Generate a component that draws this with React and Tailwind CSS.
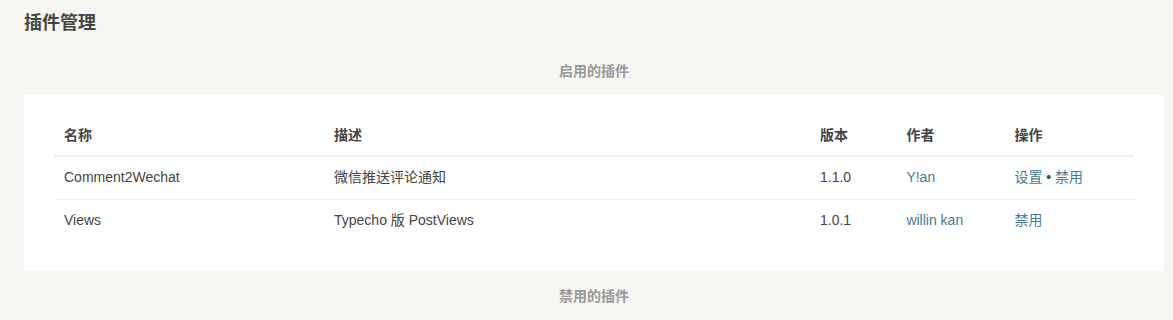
const rows = [
  { name: 'Comment2Wechat', desc: '微信推送评论通知', version: '1.1.0', author: 'Y!an', ops: ['设置', '禁用'] },
  { name: 'Views', desc: 'Typecho 版 PostViews', version: '1.0.1', author: 'willin kan', ops: ['禁用'] },
];

export default function App() {
  return (
    <div className="min-h-[320px] bg-[#f6f6f3] text-[#444] font-['Liberation_Sans','Noto_Sans_CJK_SC',sans-serif] text-[14px]">
      <div className="pl-6 pr-[9px]">
        <h2 className="pt-[11px] h-[46px] text-[18px] font-bold leading-6">插件管理</h2>
        <h4 className="h-[49px] pt-[5px] text-center text-[14px] font-bold text-[#999] leading-[40px]">启用的插件</h4>
        <div className="bg-white px-[30px] pt-[20px] pb-[29px]">
          <table className="w-full table-fixed border-collapse">
            <colgroup>
              <col className="w-[25%]" />
              <col className="w-[45%]" />
              <col className="w-[8%]" />
              <col className="w-[10%]" />
              <col className="w-[12%]" />
            </colgroup>
            <thead>
              <tr className="border-b-2 border-[#f0f0ec]">
                {['名称', '描述', '版本', '作者', '操作'].map((h) => (
                  <th key={h} className="text-left font-bold px-[10px] h-[41px] leading-5">{h}</th>
                ))}
              </tr>
            </thead>
            <tbody>
              {rows.map((r, i) => (
                <tr key={r.name} className={i === 0 ? 'border-b border-[#f0f0ec]' : ''}>
                  <td className="px-[10px] h-[43px]">{r.name}</td>
                  <td className="px-[10px]">{r.desc}</td>
                  <td className="px-[10px]">{r.version}</td>
                  <td className="px-[10px] text-[#467b96]">{r.author}</td>
                  <td className="px-[10px] text-[#467b96]">
                    {r.ops.map((o, j) => (
                      <span key={o}>
                        {j > 0 && <span className="text-[#444]"> • </span>}
                        {o}
                      </span>
                    ))}
                  </td>
                </tr>
              ))}
            </tbody>
          </table>
        </div>
        <h4 className="pt-[5px] text-center text-[14px] font-bold text-[#999] leading-[40px]">禁用的插件</h4>
      </div>
    </div>
  );
}
